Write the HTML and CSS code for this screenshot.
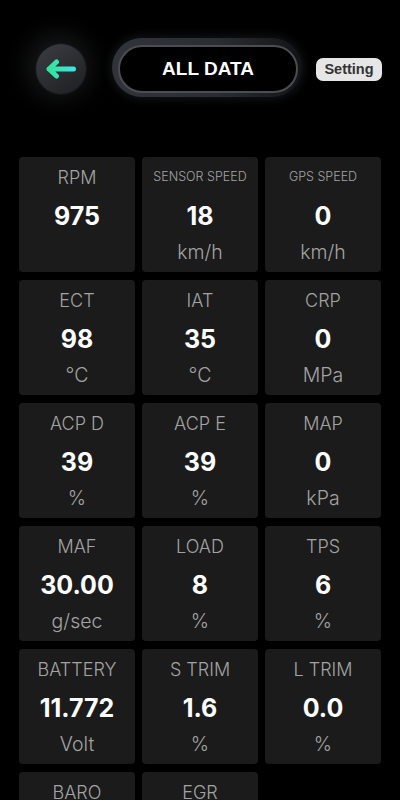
FILE: index.html
```html
<!DOCTYPE html>
<html>
  <head>
    <link rel="stylesheet" href="styles.css">
  </head>

  <body>
    <div class="header">
      <div class="back-btn">
        <svg width="30" height="20" viewBox="0 0 30 20">
          <defs>
            <linearGradient id="arrowGrad" x1="0" y1="0" x2="1" y2="0">
              <stop offset="0" stop-color="#34e39a" />
              <stop offset="1" stop-color="#41e3e2" />
            </linearGradient>
          </defs>
          <path d="M27.5 10 H3 M10.5 3 L3 10 L10.5 17" fill="none" stroke="url(#arrowGrad)" stroke-width="5" stroke-linecap="round" stroke-linejoin="round" />
        </svg>
      </div>
      <div class="title-ring">
        <div class="title">ALL DATA</div>
      </div>
      <div class="setting-btn">Setting</div>
    </div>

    <div class="grid">
      <div class="card"><div class="label">RPM</div><div class="value">975</div><div class="unit"></div></div>
      <div class="card"><div class="label small">SENSOR SPEED</div><div class="value">18</div><div class="unit">km/h</div></div>
      <div class="card"><div class="label small">GPS SPEED</div><div class="value">0</div><div class="unit">km/h</div></div>

      <div class="card"><div class="label">ECT</div><div class="value">98</div><div class="unit">°C</div></div>
      <div class="card"><div class="label">IAT</div><div class="value">35</div><div class="unit">°C</div></div>
      <div class="card"><div class="label">CRP</div><div class="value">0</div><div class="unit">MPa</div></div>

      <div class="card"><div class="label">ACP D</div><div class="value">39</div><div class="unit">%</div></div>
      <div class="card"><div class="label">ACP E</div><div class="value">39</div><div class="unit">%</div></div>
      <div class="card"><div class="label">MAP</div><div class="value">0</div><div class="unit">kPa</div></div>

      <div class="card"><div class="label">MAF</div><div class="value">30.00</div><div class="unit">g/sec</div></div>
      <div class="card"><div class="label">LOAD</div><div class="value">8</div><div class="unit">%</div></div>
      <div class="card"><div class="label">TPS</div><div class="value">6</div><div class="unit">%</div></div>

      <div class="card"><div class="label">BATTERY</div><div class="value">11.772</div><div class="unit">Volt</div></div>
      <div class="card"><div class="label">S TRIM</div><div class="value">1.6</div><div class="unit">%</div></div>
      <div class="card"><div class="label">L TRIM</div><div class="value">0.0</div><div class="unit">%</div></div>

      <div class="card"><div class="label">BARO</div><div class="value">101</div><div class="unit">kPa</div></div>
      <div class="card"><div class="label">EGR</div><div class="value">0</div><div class="unit">%</div></div>
    </div>
  </body>
</html>
```

FILE: styles.css
```css
body {
  margin: 0;
  background-color: #000;
  font-family: Inter, "Liberation Sans", sans-serif;
}

.header {
  display: flex;
  align-items: center;
  height: 137px;
  padding-left: 36px;
}

.back-btn {
  width: 50px;
  height: 50px;
  border-radius: 50%;
  display: flex;
  justify-content: center;
  align-items: center;
  background: linear-gradient(145deg, #3a3d42, #1d1f22);
  box-shadow: 0 0 0 1px #15171a, -2px -3px 24px 8px rgba(70, 72, 78, 0.3);
  margin-top: 1px;
}

.title-ring {
  margin-left: 26px;
  padding: 7px 4px 4px 6px;
  border-radius: 32px;
  background: linear-gradient(to right, #30343a, #2a2e33 55%, #121315);
  box-shadow: 0 0 10px 2px rgba(40, 44, 50, 0.45);
  margin-bottom: 2px;
}

.title {
  width: 176px;
  height: 44px;
  border: 2px solid #4a4d52;
  border-radius: 26px;
  background-color: #000;
  color: #fff;
  font-family: "Liberation Sans", Arial, sans-serif;
  font-weight: bold;
  font-size: 19px;
  display: flex;
  justify-content: center;
  align-items: center;
}

.setting-btn {
  margin-left: 14px;
  width: 66px;
  height: 23px;
  border-radius: 7px;
  background-color: #e6e6e6;
  color: #333;
  font-family: "Liberation Sans", Arial, sans-serif;
  font-weight: bold;
  font-size: 14.5px;
  display: flex;
  justify-content: center;
  align-items: center;
  margin-top: 1px;
}

.grid {
  display: grid;
  grid-template-columns: repeat(3, 1fr);
  column-gap: 7px;
  row-gap: 8px;
  margin: 20px 19px 0 19px;
}

.card {
  height: 115px;
  background-color: #1b1b1b;
  border-radius: 4px;
  display: flex;
  flex-direction: column;
  align-items: center;
  padding-top: 10px;
  box-sizing: border-box;
}

.label {
  font-size: 18px;
  font-weight: 300;
  color: #a3a3a3;
  line-height: 22px;
  height: 22px;
}

.label.small {
  font-size: 12.5px;
  line-height: 20px;
}

.value {
  margin-top: 11px;
  font-size: 25px;
  font-weight: 700;
  color: #fff;
  line-height: 32px;
  height: 32px;
}

.unit {
  margin-top: 8px;
  font-size: 19.5px;
  font-weight: 300;
  color: #a3a3a3;
  line-height: 24px;
  height: 24px;
}
```
